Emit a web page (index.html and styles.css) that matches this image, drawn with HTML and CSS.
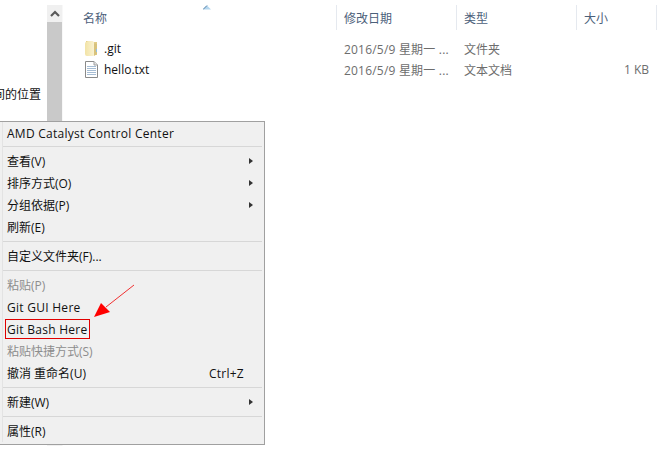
FILE: index.html
```html
<!DOCTYPE html>
<html lang="zh">
<head>
<meta charset="utf-8">
<title>Explorer</title>
<link rel="stylesheet" href="styles.css">
</head>
<body>
<div class="window">
  <aside class="nav">
    <div class="nav-text"><span class="nav-label">间的位置</span></div>
    <div class="scrollbar">
      <div class="scroll-up"><svg width="10" height="7" viewBox="0 0 10 7"><path d="M1 6 L5 2 L9 6" fill="none" stroke="#5a5a5a" stroke-width="2.2"/></svg></div>
      <div class="scroll-thumb"></div>
    </div>
  </aside>
  <main class="files">
    <div class="row head">
      <div class="cell name">名称<svg class="sort" width="8" height="5" viewBox="0 0 8 5"><path d="M0 4.5 L4 0.5 L8 4.5 Z" fill="#b4d6ee"/><path d="M0 4.5 L4 0.5" stroke="#4f7fa6" fill="none"/></svg></div>
      <div class="cell date">修改日期</div>
      <div class="cell type">类型</div>
      <div class="cell size">大小</div>
    </div>
    <div class="row item">
      <div class="cell name">
        <svg class="icon" width="16" height="17" viewBox="0 0 16 17">
          <defs><linearGradient id="fold" x1="0" y1="0" x2="1" y2="0"><stop offset="0" stop-color="#f2e3a6"/><stop offset="1" stop-color="#fbf4d6"/></linearGradient></defs>
          <path d="M2 1 H8 L9 2 H13 V15 H2 Z" fill="#e3cc85"/>
          <path d="M2 2 Q1 2 1 4 V14 Q1 16 3 16 H9 L11 15 V4 L9 1 H4 Z" fill="url(#fold)"/>
          <path d="M10 3 L13 4 V14 L10 16 Z" fill="#d8c27c"/>
          <rect x="12" y="9" width="1" height="3" fill="#8fc0e6"/>
        </svg>
        <span class="fname">.git</span>
      </div>
      <div class="cell date stamp">2016/5/9 星期一 ...</div>
      <div class="cell type">文件夹</div>
      <div class="cell size"></div>
    </div>
    <div class="row item">
      <div class="cell name">
        <svg class="icon" width="16" height="17" viewBox="0 0 16 17"><path d="M1.5 .5 H10 L13.5 4 V16.5 H1.5 Z" fill="#fff" stroke="#8a8a8a"/><path d="M10 .5 V4 H13.5" fill="#e4e4e4" stroke="#a0a0a0"/><path d="M3 5.5 H12 M3 7.5 H12 M3 9.5 H12 M3 11.5 H12 M3 13.5 H12" stroke="#a6bdd4"/></svg>
        <span class="fname">hello.txt</span>
      </div>
      <div class="cell date stamp">2016/5/9 星期一 ...</div>
      <div class="cell type">文本文档</div>
      <div class="cell size">1 KB</div>
    </div>
  </main>
</div>

<div class="menu">
  <div class="menu-item latin">AMD Catalyst Control Center</div>
  <div class="sep sep-first"></div>
  <div class="menu-item has-sub">查看(V)</div>
  <div class="menu-item has-sub">排序方式(O)</div>
  <div class="menu-item has-sub">分组依据(P)</div>
  <div class="menu-item">刷新(E)</div>
  <div class="sep"></div>
  <div class="menu-item">自定义文件夹(F)...</div>
  <div class="sep"></div>
  <div class="menu-item disabled">粘贴(P)</div>
  <div class="menu-item latin">Git GUI Here</div>
  <div class="menu-item latin"><span class="boxed">Git Bash Here</span></div>
  <div class="menu-item disabled">粘贴快捷方式(S)</div>
  <div class="menu-item"><span>撤消 重命名(U)</span><span class="shortcut latin">Ctrl+Z</span></div>
  <div class="sep"></div>
  <div class="menu-item has-sub">新建(W)</div>
  <div class="sep"></div>
  <div class="menu-item">属性(R)</div>
</div>

<svg class="arrow" width="42" height="36" viewBox="0 0 42 36"><path d="M40 1 L12 23" stroke="#f03030" stroke-width="1" fill="none"/><path d="M0 33 L7 19 L16 28 Z" fill="#ff0000"/></svg>
</body>
</html>
```
FILE: styles.css
```css
* { box-sizing: border-box; }
html, body { margin: 0; padding: 0; }
body {
  width: 664px;
  height: 450px;
  overflow: hidden;
  background: #fff;
  position: relative;
  font-family: "Open Sans", "Noto Sans CJK SC", sans-serif;
  font-size: 12px;
  color: #111;
}
.window { display: flex; height: 450px; }
.nav { width: 83px; flex: none; display: flex; padding-top: 5px; }
.nav-text { width: 47px; flex: none; overflow: hidden; padding-top: 81px; }
.nav-label { display: block; margin-left: -7px; white-space: nowrap; line-height: 18px; color: #111; }
.scrollbar { width: 16px; flex: none; display: flex; flex-direction: column; height: 441px; background: #f0f0f0; border-right: 1px solid #f8f8f8; }
.scroll-up { height: 17px; display: flex; align-items: center; justify-content: center; }
.scroll-thumb { flex: 1; margin-bottom: 4px; background: #c9c9c9; }
.files { flex: 1; }
.row { display: flex; }
.head { height: 38px; padding-top: 5px; color: #4c607a; }
.head .cell { display: flex; align-items: center; height: 25px; border-right: 1px solid #e5e9ef; position: relative; }
.item { height: 21px; align-items: center; color: #6d6d6d; }
.cell { flex: none; white-space: nowrap; }
.name { width: 254px; }
.item .name { display: flex; align-items: center; color: #111; padding-left: 1px; }
.date { width: 120px; padding-left: 7px; }
.stamp { letter-spacing: .2px; }
.type { width: 120px; padding-left: 7px; }
.size { width: 80px; padding-left: 7px; }
.item .size { text-align: right; padding-right: 8px; }
.sort { position: absolute; left: 120px; top: 0; }
.icon { flex: none; margin-right: 4px; }
.menu {
  position: absolute;
  left: 0;
  top: 121px;
  width: 265px;
  height: 324px;
  background: #f0f0f0;
  border: 1px solid #a0a0a0;
  border-left: 0;
  padding: 0 0 2px 0;
  display: flex;
  flex-direction: column;
}
.menu::before {
  content: "";
  position: absolute;
  left: 2px;
  top: 0;
  bottom: 2px;
  width: 1px;
  background: #e3e3e3;
}
.menu-item {
  height: 22px;
  flex: none;
  padding: 0 20px 0 7px;
  line-height: 24px;
  display: flex;
  justify-content: space-between;
  position: relative;
  color: #111;
  white-space: nowrap;
}
.latin { letter-spacing: .27px; }
.has-sub::after {
  content: "";
  position: absolute;
  left: 249px;
  top: 8px;
  border-left: 4px solid #333;
  border-top: 3.5px solid transparent;
  border-bottom: 3.5px solid transparent;
}
.disabled { color: #8d8d8d; }
.shortcut { margin-left: auto; }
.sep { height: 1px; flex: none; margin: 3px 2px 3px 3px; background: #d7d7d7; }
.sep-first { margin-top: 2px; }
.boxed { position: relative; }
.boxed::after {
  content: "";
  position: absolute;
  left: -2px;
  right: -2px;
  top: 1px;
  bottom: 1px;
  border: 1px solid #e00000;
}
.arrow { position: absolute; left: 94px; top: 284px; }
```
